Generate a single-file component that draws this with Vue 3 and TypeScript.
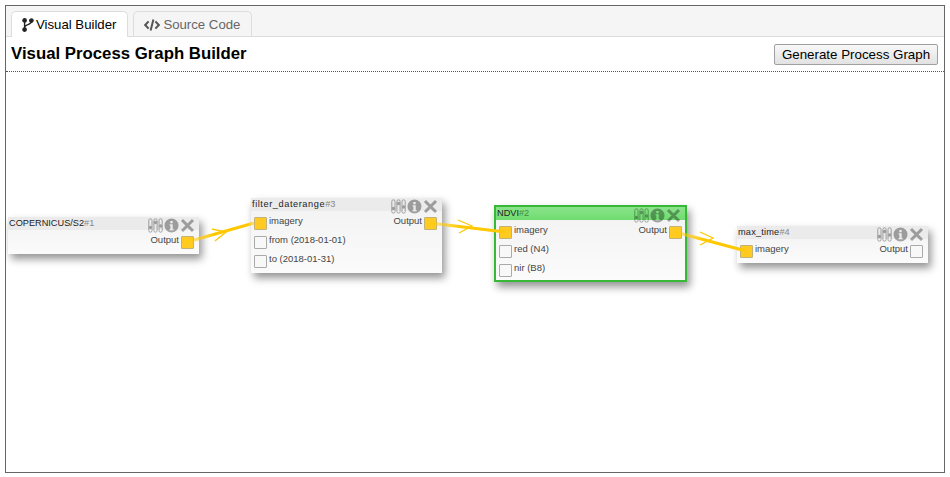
<script setup lang="ts">
interface GraphNode {
    id: number
    name: string
    x: number
    y: number
    tracking?: number
    inputs: { label: string; on: boolean }[]
    output: boolean
    active?: boolean
}

const nodes: GraphNode[] = [
    { id: 1, name: 'COPERNICUS/S2', x: 2, y: 145, inputs: [], output: true },
    {
        id: 3, name: 'filter_daterange', x: 245, y: 126, tracking: 0.58, output: true,
        inputs: [
            { label: 'imagery', on: true },
            { label: 'from (2018-01-01)', on: false },
            { label: 'to (2018-01-31)', on: false }
        ]
    },
    {
        id: 2, name: 'NDVI', x: 488, y: 133, output: true, active: true,
        inputs: [
            { label: 'imagery', on: true },
            { label: 'red (N4)', on: false },
            { label: 'nir (B8)', on: false }
        ]
    },
    {
        id: 4, name: 'max_time', x: 731, y: 154, tracking: 0.2, output: false,
        inputs: [{ label: 'imagery', on: true }]
    }
]

const edges = [
    { id: 'e1', x1: 181, y1: 170, x2: 248, y2: 151, arrow: 'M206 157 L220 160 L209 169' },
    { id: 'e2', x1: 424, y1: 151, x2: 499, y2: 160, arrow: 'M452 148 L466 154 L453 161' },
    { id: 'e3', x1: 669, y1: 160, x2: 740, y2: 179, arrow: 'M694 160 L707 166 L694 173' }
]
</script>

<template>
    <div class="app">
        <div class="tabs">
            <div class="tab tab_active">
                <svg class="tab_icon" viewBox="0 0 12 14" width="12" height="14">
                    <circle cx="2.6" cy="2.4" r="1.7" />
                    <circle cx="2.6" cy="11.6" r="1.7" />
                    <circle cx="9.4" cy="2.6" r="1.7" />
                    <path d="M2.6 3v8M9.4 3.5c0 3.6-6.8 2.6-6.8 6" />
                </svg>
                Visual Builder
            </div>
            <div class="tab">
                <svg class="tab_icon code" viewBox="0 0 16 14" width="16" height="14">
                    <path d="M4.6 3.4 1.2 7l3.4 3.6M11.4 3.4 14.8 7l-3.4 3.6M9.4 1.4 6.6 12.6" />
                </svg>
                Source Code
            </div>
        </div>
        <div class="toolbar">
            <h3>Visual Process Graph Builder</h3>
            <button class="generate">Generate Process Graph</button>
        </div>
        <div class="canvas">
            <div
                v-for="node in nodes"
                :key="node.id"
                class="node"
                :class="{ node_active: node.active }"
                :style="{ left: node.x + 'px', top: node.y + 'px' }"
            >
                <div class="node_head">
                    <span class="node_name" :style="{ letterSpacing: (node.tracking || 0) + 'px' }">{{ node.name }}</span><span class="node_id">#{{ node.id }}</span>
                    <div class="node_icons">
                        <svg viewBox="0 0 15 15" width="15" height="15">
                            <g fill="none" stroke="currentColor" stroke-width="1">
                                <rect x="0.8" y="0.8" width="3.2" height="13.4" rx="1.6" />
                                <rect x="5.9" y="0.8" width="3.2" height="13.4" rx="1.6" />
                                <rect x="11" y="0.8" width="3.2" height="13.4" rx="1.6" />
                            </g>
                            <circle cx="2.4" cy="9.5" r="1.7" fill="currentColor" />
                            <circle cx="7.5" cy="4.5" r="1.7" fill="currentColor" />
                            <circle cx="12.6" cy="8" r="1.7" fill="currentColor" />
                        </svg>
                        <svg viewBox="0 0 15 15" width="15" height="15">
                            <path
                                fill="currentColor"
                                fill-rule="evenodd"
                                d="M7.5.5a7 7 0 1 0 0 14 7 7 0 0 0 0-14ZM6.3 3h2.4v2.2H6.3ZM5.6 6.2h3.1v4.9h.9v1.2H5.6v-1.2h.8V7.4h-.8Z"
                            />
                        </svg>
                        <svg viewBox="0 0 15 15" width="15" height="15">
                            <path d="M2 2 13 13M13 2 2 13" stroke="currentColor" stroke-width="3" fill="none" />
                        </svg>
                    </div>
                </div>
                <div class="node_body">
                    <div class="ports">
                        <div v-for="input in node.inputs" :key="input.label" class="port">
                            <span class="socket" :class="{ socket_on: input.on }"></span>
                            <span class="port_label">{{ input.label }}</span>
                        </div>
                    </div>
                    <div class="port port_out">
                        <span class="port_label">Output</span>
                        <span class="socket" :class="{ socket_on: node.output }"></span>
                    </div>
                </div>
            </div>
            <svg class="edges" width="938" height="400">
                <defs>
                    <linearGradient
                        v-for="edge in edges"
                        :id="edge.id"
                        :key="edge.id"
                        gradientUnits="userSpaceOnUse"
                        :x1="edge.x1"
                        :y1="edge.y1"
                        :x2="edge.x2"
                        :y2="edge.y2"
                    >
                        <stop offset="0" stop-color="#ffcc00" stop-opacity="0.35" />
                        <stop offset="0.4" stop-color="#ffc800" />
                        <stop offset="0.9" stop-color="#ffc800" />
                        <stop offset="1" stop-color="#ffc800" stop-opacity="0.5" />
                    </linearGradient>
                </defs>
                <g v-for="edge in edges" :key="edge.id">
                    <line
                        :x1="edge.x1"
                        :y1="edge.y1"
                        :x2="edge.x2"
                        :y2="edge.y2"
                        :stroke="`url(#${edge.id})`"
                        stroke-width="3"
                    />
                    <path :d="edge.arrow" fill="none" stroke="#ffc800" stroke-width="1.3" />
                </g>
            </svg>
        </div>
    </div>
</template>

<style>
body {
    margin: 0;
    background: #fff;
}
</style>

<style scoped>
.app {
    box-sizing: border-box;
    width: 940px;
    height: 468px;
    margin: 5px 0 0 5px;
    border: 1px solid #666;
    display: flex;
    flex-direction: column;
    font-family: "Liberation Sans", Arial, sans-serif;
    color: #000;
    overflow: hidden;
}

.tabs {
    display: flex;
    gap: 5px;
    height: 31px;
    box-sizing: border-box;
    padding: 5px 0 0 5px;
    background: #f5f5f5;
    border-bottom: 1px solid #ddd;
}

.tab {
    height: 26px;
    box-sizing: border-box;
    padding: 0 11px 0 10px;
    display: flex;
    align-items: center;
    gap: 2px;
    font-size: 13.2px;
    color: #666;
    border: 1px solid #ddd;
    border-bottom: 0;
    border-radius: 5px 5px 0 0;
}

.tab_active {
    background: #fff;
    color: #000;
}

.tab_icon {
    fill: #222;
    stroke: #222;
    stroke-width: 1.3;
}

.tab_icon path {
    fill: none;
    stroke-width: 1.4;
}

.tab_icon.code {
    stroke: #555;
    margin-right: 1px;
}

.tab_icon.code path {
    stroke-width: 2;
}

.toolbar {
    height: 35px;
    box-sizing: border-box;
    display: flex;
    align-items: flex-start;
    justify-content: space-between;
    padding: 7px 6px 0 5px;
    border-bottom: 1px dotted #555;
}

.toolbar h3 {
    margin: 0;
    font-size: 16.8px;
    line-height: 20px;
    font-weight: bold;
}

.generate {
    width: 164px;
    height: 21px;
    padding: 0;
    font-family: inherit;
    font-size: 13.33px;
    color: #000;
    background: linear-gradient(#f8f8f8, #e2e2e2);
    border: 1px solid #a0a0a0;
    border-radius: 2px;
}

.canvas {
    position: relative;
    flex: 1;
}

.edges {
    position: absolute;
    left: 0;
    top: 0;
    pointer-events: none;
}

.node {
    position: absolute;
    width: 191px;
    box-sizing: border-box;
    background: linear-gradient(#f2f2f2, #fbfbfb);
    box-shadow: 3px 5px 8px rgba(0, 0, 0, 0.42);
}

.node_active {
    width: 193px;
    border: 2px solid #37b837;
}

.node_head {
    height: 13px;
    display: flex;
    align-items: center;
    padding-left: 1px;
    font-size: 9.2px;
    line-height: 13px;
    background: #ebebeb;
    color: #222;
    position: relative;
}

.node_active .node_head {
    background: linear-gradient(#8be38b, #6fdc6f);
}

.node_id {
    color: #888;
}

.node_active .node_id {
    color: #3f8f3f;
}

.node_icons {
    position: absolute;
    right: 4px;
    top: 1px;
    display: flex;
    gap: 1px;
    color: #000;
    opacity: 0.33;
}

.node_icons svg {
    display: block;
}

.node_body {
    display: flex;
    justify-content: space-between;
    padding: 3px 5px 2px 3px;
}

.node_active .node_body {
    padding: 3px 3px 0 3px;
}

.ports {
    display: flex;
    flex-direction: column;
}

.port {
    height: 19px;
    display: flex;
    align-items: flex-start;
    gap: 2px;
    font-size: 9.5px;
    color: #444;
}

.port_label {
    line-height: 14px;
}

.socket {
    width: 11px;
    height: 11px;
    margin-top: 3px;
    border: 1px solid #aaa;
    border-radius: 1px;
    background: #f8f8f8;
}

.socket_on {
    background: #ffcb22;
    border-color: #c2b27a;
}
</style>
